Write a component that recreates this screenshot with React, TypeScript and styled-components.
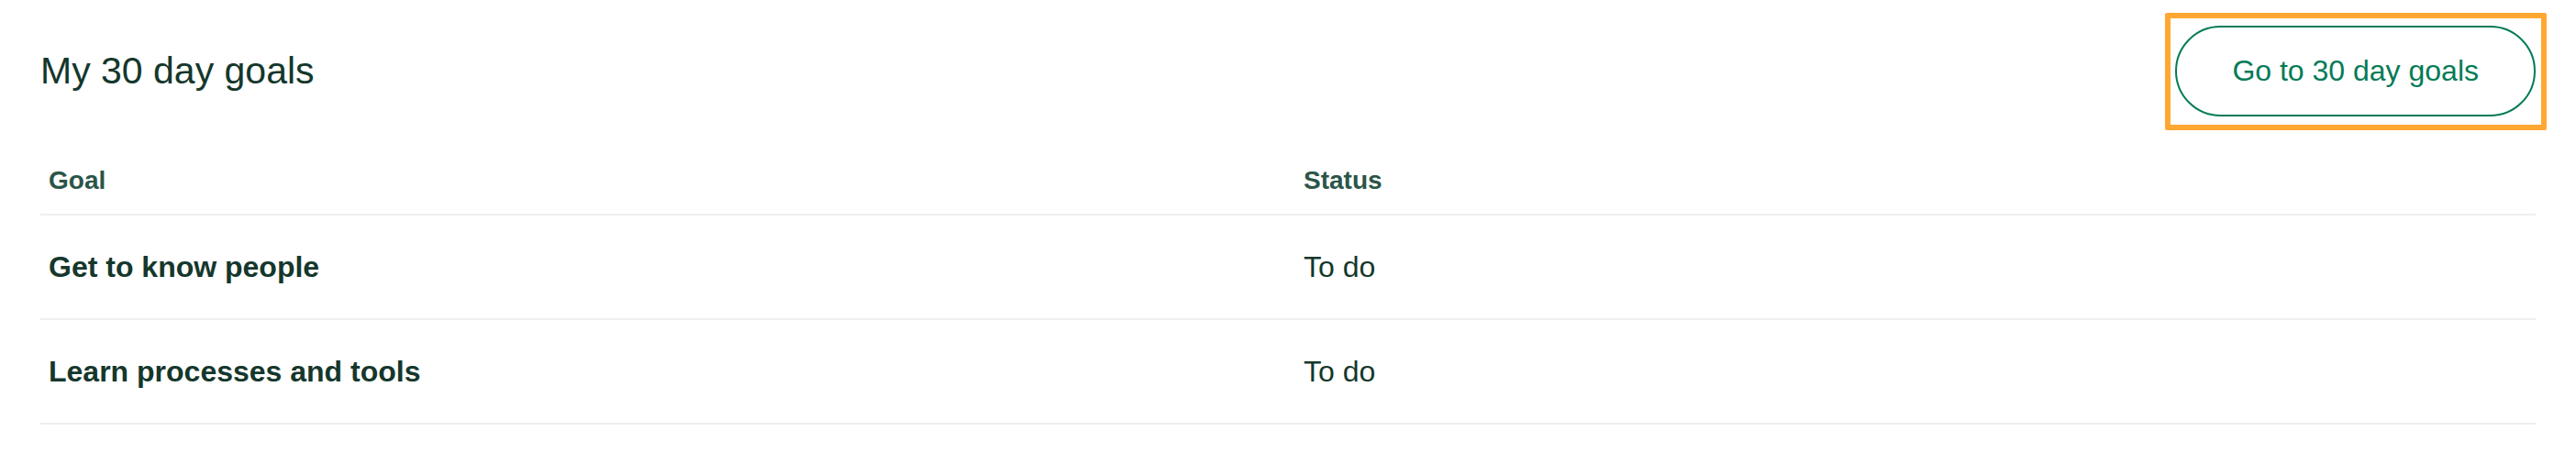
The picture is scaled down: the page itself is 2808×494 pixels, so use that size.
import React from "react";
import styled, { createGlobalStyle } from "styled-components";

type Goal = {
  name: string,
  status: string,
}

const goals: Array<Goal> = [
  { name: "Get to know people", status: "To do" },
  { name: "Learn processes and tools", status: "To do" },
];

const GlobalStyle = createGlobalStyle`
  body {
    margin: 0;
    background: #ffffff;
    font-family: "Liberation Sans", Arial, sans-serif;
    color: #15372c;
  }
`;

const App = () => {
  return (
    <>
      <GlobalStyle />
      <Page>
        <TopBar>
          <Title>My 30 day goals</Title>
          <ButtonWrap>
            <GoButton>Go to 30 day goals</GoButton>
            <Highlight />
          </ButtonWrap>
        </TopBar>

        <Table>
          <HeaderRow>
            <HeadCell>Goal</HeadCell>
            <HeadCell>Status</HeadCell>
          </HeaderRow>
          {goals.map((goal: Goal, idx: number) => {
            return (
              <BodyRow key={idx}>
                <GoalCell>{goal.name}</GoalCell>
                <StatusCell>{goal.status}</StatusCell>
              </BodyRow>
            )
          })}
        </Table>
      </Page>
    </>
  );
}

const Page = styled.div`
  padding: 28px 44px 0;
`;

const TopBar = styled.div`
  display: flex;
  justify-content: space-between;
  align-items: center;
`;

const Title = styled.h2`
  margin: 0;
  font-size: 41px;
  font-weight: 400;
  color: #15372c;
`;

const ButtonWrap = styled.div`
  position: relative;
  display: flex;
`;

const GoButton = styled.button`
  height: 99px;
  padding: 0 60px;
  border: 2px solid #047b57;
  border-radius: 50px;
  background: #ffffff;
  color: #047b57;
  font-family: "Liberation Sans", Arial, sans-serif;
  font-size: 32px;
  cursor: pointer;
`;

const Highlight = styled.div`
  position: absolute;
  top: -14px;
  right: -12px;
  bottom: -15px;
  left: -11px;
  border: 6px solid #ffa733;
  border-radius: 2px;
  pointer-events: none;
`;

const Table = styled.div`
  margin-top: 33px;
`;

const Row = styled.div`
  display: grid;
  grid-template-columns: 1368px 1fr;
  border-bottom: 2px solid #efefef;
`;

const HeaderRow = styled(Row)`
  height: 73px;
`;

const BodyRow = styled(Row)`
  height: 112px;
`;

const Cell = styled.div`
  display: flex;
  align-items: center;
  padding: 0 9px;
`;

const HeadCell = styled(Cell)`
  font-size: 28px;
  font-weight: 700;
  color: #2a5548;
`;

const GoalCell = styled(Cell)`
  font-size: 32px;
  font-weight: 700;
  color: #15372c;
`;

const StatusCell = styled(Cell)`
  font-size: 32px;
  color: #15372c;
`;

export default App;
